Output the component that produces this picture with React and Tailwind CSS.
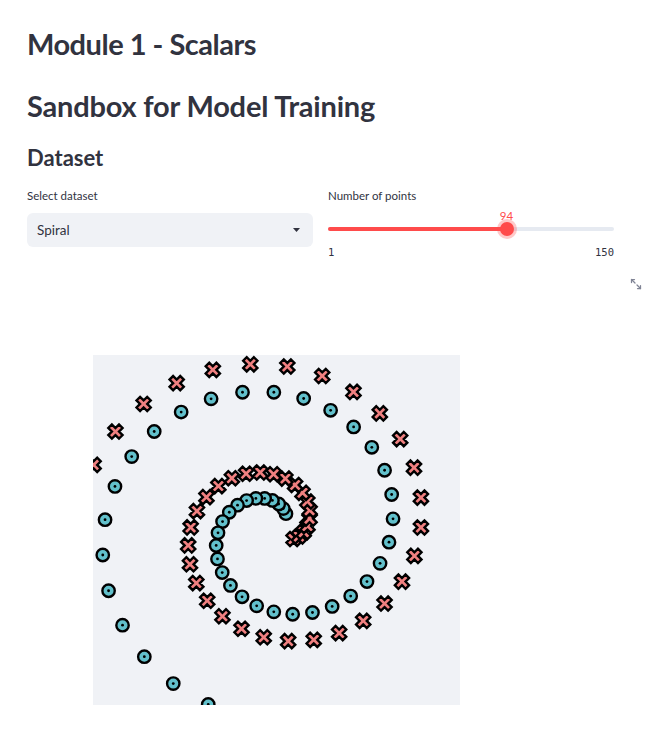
import { Maximize2 } from "lucide-react";

const W = 367;
const H = 350;

// two interleaved spirals, class 0 = circles, class 1 = crosses
function spiral(n) {
  const half = Math.floor(n / 2);
  const fx = (t) => (t * Math.cos(t)) / 20;
  const fy = (t) => (t * Math.sin(t)) / 20;
  const a = [];
  const b = [];
  for (let i = 5; i < 5 + half; i++) {
    const t = (10 * i) / half;
    a.push([fx(t) + 0.5, fy(t) + 0.5]);
    b.push([fy(-t) + 0.5, fx(-t) + 0.5]);
  }
  return { a, b };
}

const { a, b } = spiral(94);
const sx = (x) => x * W;
const sy = (y) => (1 - y) * H;

const rx = Math.round((6.3 * 0.8) / Math.sqrt(2) * 100) / 100;
const ne = `l${rx},${rx}`;
const se = `l${rx},-${rx}`;
const sw = `l-${rx},-${rx}`;
const nw = `l-${rx},${rx}`;
const xPath = `M0,${rx}${ne}${se}${sw}${se}${sw}${nw}${sw}${nw}${ne}${nw}${ne}Z`;

function Scatter() {
  return (
    <svg width={W} height={H} className="block bg-[#f0f2f6]">
      <defs>
        <clipPath id="plotclip">
          <rect x="0" y="0" width={W} height={H} />
        </clipPath>
      </defs>
      <g clipPath="url(#plotclip)">
        {a.map(([x, y], i) => (
          <g key={"c" + i} transform={`translate(${sx(x)},${sy(y)})`}>
            <circle r="6.2" fill="#62c0cb" stroke="#000" strokeWidth="2.4" />
            <circle r="1.4" fill="#000" />
          </g>
        ))}
        {b.map(([x, y], i) => (
          <path
            key={"x" + i}
            d={xPath}
            transform={`translate(${sx(x)},${sy(y)})`}
            fill="#f08080"
            stroke="#000"
            strokeWidth="2.4"
          />
        ))}
      </g>
    </svg>
  );
}

export default function App() {
  const pct = (94 - 1) / (150 - 1);
  return (
    <div className="w-[648px] min-h-[735px] bg-white text-[#31333f] font-['Lato',sans-serif] px-[27px]">
      <h1 className="pt-[26px] text-[29px] font-bold leading-[36px] tracking-[-0.5px]">Module 1 - Scalars</h1>
      <h1 className="mt-[26px] text-[29px] font-bold leading-[36px] tracking-[-0.2px]">Sandbox for Model Training</h1>
      <h2 className="mt-[20px] text-[22px] font-bold leading-[28px]">Dataset</h2>

      <div className="mt-[16px] flex gap-[15px]">
        <div className="w-[286px]">
          <div className="text-[11.5px] leading-[16px]">Select dataset</div>
          <div className="mt-[9px] h-[34px] rounded-[6px] bg-[#f0f2f6] flex items-center justify-between px-[10px]">
            <span className="text-[13.5px]">Spiral</span>
            <svg width="7" height="4" viewBox="0 0 7 4" className="mr-[3px]">
              <path d="M0 0h7L3.5 4z" fill="#31333f" />
            </svg>
          </div>
        </div>

        <div className="w-[286px]">
          <div className="text-[11.5px] leading-[16px]">Number of points</div>
          <div className="relative mt-[9px] h-[34px]">
            <div className="absolute left-0 right-0 top-[14px] h-[4px] rounded-full bg-[#e6eaf1]" />
            <div
              className="absolute left-0 top-[14px] h-[4px] rounded-full bg-[#ff4b4b]"
              style={{ width: `${pct * 100}%` }}
            />
            <div
              className="absolute top-[9px] w-[14px] h-[14px] -ml-[7px] rounded-full bg-[#ff4b4b] shadow-[0_0_0_3px_rgba(255,75,75,0.3)]"
              style={{ left: `${pct * 100}%` }}
            />
            <div
              className="absolute -top-[4px] -translate-x-1/2 text-[11.5px] leading-[14px] text-[#ff4b4b]"
              style={{ left: `${pct * 100}%` }}
            >
              94
            </div>
          </div>
          <div className="-mt-[2px] flex justify-between font-['DejaVu_Sans_Mono',monospace] text-[10.5px] leading-[14px] text-[#31333f]">
            <span>1</span>
            <span>150</span>
          </div>
        </div>
      </div>

      <div className="mt-[19px] flex justify-end mr-[-21px]">
        <Maximize2 size={12} strokeWidth={2.5} className="text-[#808495] rotate-90" />
      </div>

      <div className="mt-[65px] ml-[66px]">
        <Scatter />
      </div>
    </div>
  );
}
